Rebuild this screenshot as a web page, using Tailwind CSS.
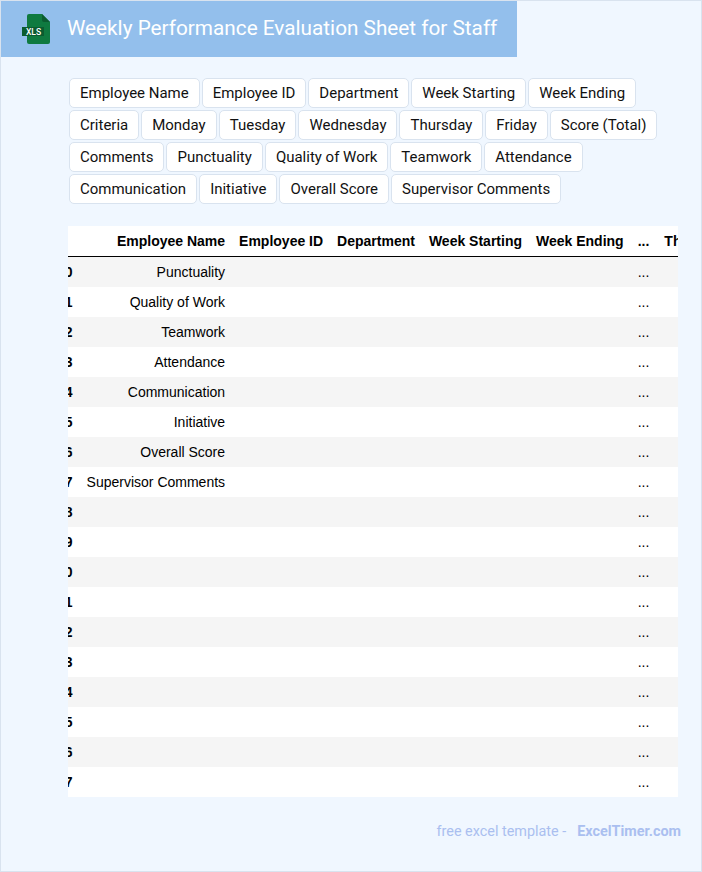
<!DOCTYPE html>
<html lang="en">
<head>
  <meta charset="UTF-8">
  <meta name="viewport" content="width=device-width, initial-scale=1.0">
  <title>Weekly Performance Evaluation Sheet for Staff</title>
  <script src="https://cdn.jsdelivr.net/npm/@tailwindcss/browser@4"></script>
</head>
<body class="bg-[#f0f7ff] font-['Roboto',sans-serif]">
  <div class="h-[872px] border border-[#d9e3ef] overflow-hidden">
    <!-- header -->
    <div class="flex items-center w-[516px] h-[56px] bg-[#93bfec]">
      <svg class="ml-[21px] w-[28px] h-[32px]" viewBox="0 0 28 32">
        <path d="M7 1h13l8 8v20a2 2 0 0 1-2 2H7a2 2 0 0 1-2-2V3a2 2 0 0 1 2-2z" fill="#0f7a40"/>
        <path d="M20 1l8 8h-6a2 2 0 0 1-2-2z" fill="#0b5c30"/>
        <rect x="0" y="14" width="22" height="9" fill="#0b5c30"/>
        <text x="4" y="21.5" font-size="8.5" font-weight="500" fill="#fff" font-family="Roboto, sans-serif">XLS</text>
      </svg>
      <h1 class="ml-[17px] text-[20.75px] text-white whitespace-nowrap">Weekly Performance Evaluation Sheet for Staff</h1>
    </div>

    <!-- tags -->
    <div class="flex flex-wrap gap-[2px] ml-[68px] mt-[21px] w-[609px] text-[14.99px] text-[#111]">
      <span class="h-[30px] leading-[28px] px-[10px] bg-white border border-[#d9e3ef] rounded-[5px]">Employee Name</span>
      <span class="h-[30px] leading-[28px] px-[10px] bg-white border border-[#d9e3ef] rounded-[5px]">Employee ID</span>
      <span class="h-[30px] leading-[28px] px-[10px] bg-white border border-[#d9e3ef] rounded-[5px]">Department</span>
      <span class="h-[30px] leading-[28px] px-[10px] bg-white border border-[#d9e3ef] rounded-[5px]">Week Starting</span>
      <span class="h-[30px] leading-[28px] px-[10px] bg-white border border-[#d9e3ef] rounded-[5px]">Week Ending</span>
      <span class="h-[30px] leading-[28px] px-[10px] bg-white border border-[#d9e3ef] rounded-[5px]">Criteria</span>
      <span class="h-[30px] leading-[28px] px-[10px] bg-white border border-[#d9e3ef] rounded-[5px]">Monday</span>
      <span class="h-[30px] leading-[28px] px-[10px] bg-white border border-[#d9e3ef] rounded-[5px]">Tuesday</span>
      <span class="h-[30px] leading-[28px] px-[10px] bg-white border border-[#d9e3ef] rounded-[5px]">Wednesday</span>
      <span class="h-[30px] leading-[28px] px-[10px] bg-white border border-[#d9e3ef] rounded-[5px]">Thursday</span>
      <span class="h-[30px] leading-[28px] px-[10px] bg-white border border-[#d9e3ef] rounded-[5px]">Friday</span>
      <span class="h-[30px] leading-[28px] px-[10px] bg-white border border-[#d9e3ef] rounded-[5px]">Score (Total)</span>
      <span class="h-[30px] leading-[28px] px-[10px] bg-white border border-[#d9e3ef] rounded-[5px]">Comments</span>
      <span class="h-[30px] leading-[28px] px-[10px] bg-white border border-[#d9e3ef] rounded-[5px]">Punctuality</span>
      <span class="h-[30px] leading-[28px] px-[10px] bg-white border border-[#d9e3ef] rounded-[5px]">Quality of Work</span>
      <span class="h-[30px] leading-[28px] px-[10px] bg-white border border-[#d9e3ef] rounded-[5px]">Teamwork</span>
      <span class="h-[30px] leading-[28px] px-[10px] bg-white border border-[#d9e3ef] rounded-[5px]">Attendance</span>
      <span class="h-[30px] leading-[28px] px-[10px] bg-white border border-[#d9e3ef] rounded-[5px]">Communication</span>
      <span class="h-[30px] leading-[28px] px-[10px] bg-white border border-[#d9e3ef] rounded-[5px]">Initiative</span>
      <span class="h-[30px] leading-[28px] px-[10px] bg-white border border-[#d9e3ef] rounded-[5px]">Overall Score</span>
      <span class="h-[30px] leading-[28px] px-[10px] bg-white border border-[#d9e3ef] rounded-[5px]">Supervisor Comments</span>
    </div>

    <!-- table, scrolled sideways so only part of it shows -->
    <div class="ml-[67px] mt-[22px] w-[610px] h-[571px] overflow-hidden bg-white">
      <table id="sheet" class="-ml-[18px] border-separate border-spacing-0 whitespace-nowrap text-[14px] text-black font-['Liberation_Sans',sans-serif]">
        <thead>
          <tr class="h-[31px]">
            <th class="px-[7px] text-right font-bold border-b border-black"></th>
            <th class="px-[7px] text-right font-bold border-b border-black">Employee Name</th>
            <th class="px-[7px] text-right font-bold border-b border-black">Employee ID</th>
            <th class="px-[7px] text-right font-bold border-b border-black">Department</th>
            <th class="px-[7px] text-right font-bold border-b border-black">Week Starting</th>
            <th class="px-[7px] text-right font-bold border-b border-black">Week Ending</th>
            <th class="pl-[7px] pr-[8px] text-right font-bold border-b border-black">...</th>
            <th class="px-[7px] text-right font-bold border-b border-black">Thursday</th>
          </tr>
        </thead>
        <tbody id="rows"></tbody>
      </table>
    </div>

    <!-- footer -->
    <div class="flex justify-end mt-[24px] mr-[20px] text-[14.4px] text-[#aabff0]">
      <span>free excel template -</span>
      <span class="ml-[11px] font-bold">ExcelTimer.com</span>
    </div>
  </div>
  <script>
    const names = ['Punctuality', 'Quality of Work', 'Teamwork', 'Attendance', 'Communication', 'Initiative', 'Overall Score', 'Supervisor Comments'];
    let html = '';
    for (let i = 0; i < 18; i++) {
      const bg = i % 2 === 0 ? 'bg-[#f5f5f5]' : 'bg-white';
      html += `<tr class="h-[30px] ${bg}">
        <th class="px-[7px] text-right font-bold">${i + 10}</th>
        <td class="px-[7px] text-right">${names[i] || ''}</td>
        <td class="px-[7px]"></td><td class="px-[7px]"></td><td class="px-[7px]"></td><td class="px-[7px]"></td>
        <td class="pl-[7px] pr-[8px] text-right">...</td>
        <td class="px-[7px]"></td>
      </tr>`;
    }
    document.getElementById('rows').innerHTML = html;
  </script>
</body>
</html>
